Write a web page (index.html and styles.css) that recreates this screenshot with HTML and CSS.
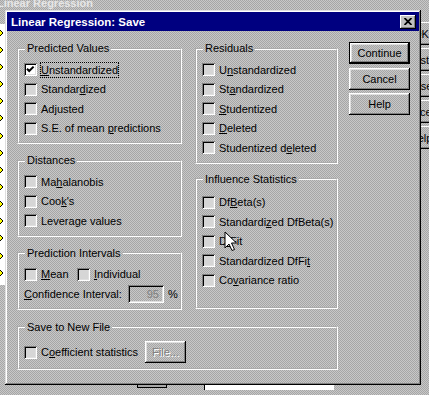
FILE: index.html
```html
<!DOCTYPE html>
<html lang="en">
<head>
  <title>Linear Regression: Save</title>
  <meta charset="UTF-8">
  <link rel="stylesheet" href="styles.css">
</head>
<body>
  <div class="desktop">
    <!-- the parent dialog, mostly hidden behind -->
    <div class="under-title">Linear Regression</div>
    <div class="under-list">
      <svg width="6" height="262" viewBox="0 0 6 262">
        <g fill="#ffff00" stroke="#000" stroke-width="1">
          <polygon points="-1,5 3,9 -1,13 -5,9"/>
          <polygon points="-1,22 3,26 -1,30 -5,26"/>
          <polygon points="-1,39 3,43 -1,47 -5,43"/>
          <polygon points="-1,56 3,60 -1,64 -5,60"/>
          <polygon points="-1,73 3,77 -1,81 -5,77"/>
          <polygon points="-1,90 3,94 -1,98 -5,94"/>
          <polygon points="-1,108 3,112 -1,116 -5,112"/>
          <polygon points="-1,125 3,129 -1,133 -5,129"/>
          <polygon points="-1,142 3,146 -1,150 -5,146"/>
          <polygon points="-1,159 3,163 -1,167 -5,163"/>
          <polygon points="-1,176 3,180 -1,184 -5,180"/>
          <polygon points="-1,193 3,197 -1,201 -5,197"/>
          <polygon points="-1,210 3,214 -1,218 -5,214"/>
          <polygon points="-1,228 3,232 -1,236 -5,232"/>
          <polygon points="-1,245 3,249 -1,253 -5,249"/>
        </g>
      </svg>
    </div>
    <div class="under-buttons">
      <div class="under-btn">OK</div>
      <div class="under-btn">Paste</div>
      <div class="under-btn">Reset</div>
      <div class="under-btn under-cancel">Cancel</div>
      <div class="under-btn">Help</div>
    </div>
    <div class="under-smallbtn"></div>
    <div class="under-field"></div>

    <div class="dialog">
      <div class="titlebar">
        <span class="title">Linear Regression: Save</span>
        <span class="close-btn">
          <svg width="8" height="7" viewBox="0 0 8 7"><path d="M0.5 0 L7.5 7 M7.5 0 L0.5 7" stroke="#000" stroke-width="1.8"/></svg>
        </span>
      </div>

      <div class="dialog-body">
        <div class="top-row">
          <div class="col col-left">
            <fieldset class="group">
              <legend>Predicted Values</legend>
              <div class="group-body">
                <div class="row">
                  <span class="check checked"><svg width="9" height="9" viewBox="0 0 9 9"><path d="M1 3.8 L3.2 6 L7.6 1.6" fill="none" stroke="#000" stroke-width="2"/></svg></span>
                  <span class="label focus"><u>U</u>nstandardized</span>
                </div>
                <div class="row"><span class="check"></span><span class="label">Standar<u>d</u>ized</span></div>
                <div class="row"><span class="check"></span><span class="label">Ad<u>j</u>usted</span></div>
                <div class="row"><span class="check"></span><span class="label">S.E. of mean <u>p</u>redictions</span></div>
              </div>
            </fieldset>

            <fieldset class="group">
              <legend>Distances</legend>
              <div class="group-body">
                <div class="row"><span class="check"></span><span class="label">Ma<u>h</u>alanobis</span></div>
                <div class="row"><span class="check"></span><span class="label">Coo<u>k</u>'s</span></div>
                <div class="row"><span class="check"></span><span class="label">Levera<u>g</u>e values</span></div>
              </div>
            </fieldset>

            <fieldset class="group">
              <legend>Prediction Intervals</legend>
              <div class="group-body">
                <div class="row">
                  <span class="check"></span><span class="label label-mean"><u>M</u>ean</span>
                  <span class="check"></span><span class="label"><u>I</u>ndividual</span>
                </div>
                <div class="row">
                  <span class="label label-ci"><u>C</u>onfidence Interval:</span>
                  <span class="ci-input">95</span>
                  <span class="label">%</span>
                </div>
              </div>
            </fieldset>
          </div>

          <div class="col col-mid">
            <fieldset class="group">
              <legend>Residuals</legend>
              <div class="group-body">
                <div class="row"><span class="check"></span><span class="label">U<u>n</u>standardized</span></div>
                <div class="row"><span class="check"></span><span class="label">St<u>a</u>ndardized</span></div>
                <div class="row"><span class="check"></span><span class="label"><u>S</u>tudentized</span></div>
                <div class="row"><span class="check"></span><span class="label"><u>D</u>eleted</span></div>
                <div class="row"><span class="check"></span><span class="label">Studentized d<u>e</u>leted</span></div>
              </div>
            </fieldset>

            <fieldset class="group group-influence">
              <legend>Influence Statistics</legend>
              <div class="group-body">
                <div class="row"><span class="check"></span><span class="label">Df<u>B</u>eta(s)</span></div>
                <div class="row"><span class="check"></span><span class="label">Standardi<u>z</u>ed DfBeta(s)</span></div>
                <div class="row"><span class="check"></span><span class="label">D<u>f</u>Fit</span></div>
                <div class="row"><span class="check"></span><span class="label">Standardized DfFi<u>t</u></span></div>
                <div class="row"><span class="check"></span><span class="label">Co<u>v</u>ariance ratio</span></div>
              </div>
            </fieldset>
          </div>

          <div class="col col-buttons">
            <div class="btn btn-default">Continue</div>
            <div class="btn">Cancel</div>
            <div class="btn">Help</div>
          </div>
        </div>

        <fieldset class="group group-save">
          <legend>Save to New File</legend>
          <div class="group-body">
            <div class="row row-save">
              <span class="check"></span><span class="label label-coef">C<u>o</u>efficient statistics</span>
              <span class="btn btn-file disabled">File...</span>
            </div>
          </div>
        </fieldset>
      </div>
    </div>

    <svg class="cursor" width="14" height="21" viewBox="0 0 14 21">
      <polygon points="1,1 1,17 5,13 8,19.5 10.5,18.5 7.5,12 12.5,12" fill="#fff" stroke="#000" stroke-width="1"/>
    </svg>
  </div>
</body>
</html>
```

FILE: styles.css
```css
:root {
  --face: #c0c0c0;
  --shadow: #808080;
  --light: #dfdfdf;
  --title: #000080;
  --dither: repeating-conic-gradient(#c8c8c8 0 25%, #a6a6a6 0 50%);
}

* {
  box-sizing: border-box;
}

html, body {
  margin: 0;
  padding: 0;
}

body {
  font-family: "Liberation Sans", Arial, sans-serif;
  font-size: 11px;
  color: #000;
  background: #b4b4b4;
}

.desktop {
  position: relative;
  width: 429px;
  height: 395px;
  overflow: hidden;
  background-image: var(--dither);
  background-size: 2px 2px;
  background-attachment: fixed;
}

/* parent window bits */
.under-title {
  position: absolute;
  left: -3px;
  top: -2px;
  font-weight: bold;
  font-size: 11px;
  line-height: 11px;
  color: #e6e6e6;
}

.under-list {
  position: absolute;
  left: 0;
  top: 24px;
  width: 5px;
  height: 261px;
  background: #fff;
}

.under-list svg {
  display: block;
  overflow: visible;
}

.under-buttons {
  position: absolute;
  left: 391px;
  top: 22px;
  display: flex;
  flex-direction: column;
  gap: 3px;
}

.under-btn {
  width: 60px;
  height: 23px;
  display: flex;
  align-items: center;
  justify-content: center;
  box-shadow: inset -1px -1px #000, inset 1px 1px #fff, inset -2px -2px var(--shadow);
}

.under-cancel {
  padding-right: 8px;
}

.under-smallbtn {
  position: absolute;
  left: 137px;
  top: 378px;
  width: 30px;
  height: 10px;
  background: #a8a8a8;
  border: 1px solid #000;
}

.under-field {
  position: absolute;
  left: 204px;
  top: 378px;
  width: 130px;
  height: 12px;
  background: #fff;
  border-left: 1px solid #000;
}

/* dialog */
.dialog {
  position: absolute;
  left: 5px;
  top: 10px;
  width: 416px;
  height: 375px;
  padding: 2px;
  background-image: var(--dither);
  background-size: 2px 2px;
  background-attachment: fixed;
  box-shadow: inset -1px -1px #000, inset 1px 1px var(--light), inset -2px -2px var(--shadow), inset 2px 2px #fff;
}

.titlebar {
  height: 19px;
  background: var(--title);
  display: flex;
  align-items: center;
  justify-content: space-between;
  padding: 0 3px 0 4px;
}

.title {
  color: #fff;
  font-weight: bold;
  font-size: 11.5px;
}

.close-btn {
  width: 16px;
  height: 14px;
  background: var(--face);
  display: flex;
  align-items: center;
  justify-content: center;
  box-shadow: inset -1px -1px #000, inset 1px 1px #fff, inset -2px -2px var(--shadow);
}

.close-btn svg {
  display: block;
}

.dialog-body {
  padding: 11px 0 0 10px;
}

.top-row {
  display: flex;
  align-items: flex-start;
}

.col {
  display: flex;
  flex-direction: column;
}

.col-left {
  width: 165px;
  gap: 10px;
}

.col-mid {
  width: 143px;
  margin-left: 13px;
  gap: 9px;
}

.col-buttons {
  width: 61px;
  margin-left: 11px;
  gap: 3.5px;
}

/* group boxes */
.group {
  margin: 0;
  padding: 0;
  min-width: 0;
  border: 2px groove #fff;
}

.group legend {
  padding: 0 2px;
  margin-left: 6px;
  line-height: 13px;
}

.group-body {
  padding: 5px 0 4px 5px;
}

.group-influence .group-body {
  padding-top: 7px;
  padding-bottom: 17px;
}

.group-save {
  width: 321px;
  margin-top: 11px;
}

.group-save .group-body {
  padding-top: 7.5px;
  padding-bottom: 5px;
}

.row {
  display: flex;
  align-items: center;
  height: 19.5px;
  gap: 4px;
}

.row-save {
  height: 22px;
}

.check {
  flex: none;
  width: 13px;
  height: 13px;
  background: #d6d6d6;
  display: flex;
  align-items: center;
  justify-content: center;
  box-shadow: inset 1px 1px var(--shadow), inset -1px -1px #fff, inset 2px 2px #000, inset -2px -2px var(--light);
}

.check.checked {
  background: #fff;
}

.check svg {
  display: block;
}

.label {
  white-space: nowrap;
}

.label u {
  text-underline-offset: 1px;
}

.focus {
  border: 1px dotted #000;
  padding: 1px 0;
  margin-left: -1px;
}

.label-mean {
  width: 32px;
}

.label-ci {
  width: 100px;
}

.label-coef {
  width: 100px;
}

.ci-input {
  width: 36px;
  height: 18px;
  display: flex;
  align-items: center;
  justify-content: flex-end;
  padding-right: 5px;
  color: var(--shadow);
  box-shadow: inset 1px 1px var(--shadow), inset -1px -1px #fff, inset 2px 2px #000, inset -2px -2px var(--light);
}

/* push buttons */
.btn {
  height: 22px;
  display: flex;
  align-items: center;
  justify-content: center;
  box-shadow: inset -1px -1px #000, inset 1px 1px #fff, inset -2px -2px var(--shadow), inset 2px 2px var(--light);
}

.btn-default {
  border: 1px solid #000;
}

.btn-file {
  width: 41px;
}

.btn.disabled {
  color: var(--shadow);
  text-shadow: 1px 1px #fff;
}

.cursor {
  position: absolute;
  left: 224px;
  top: 231px;
}
```
